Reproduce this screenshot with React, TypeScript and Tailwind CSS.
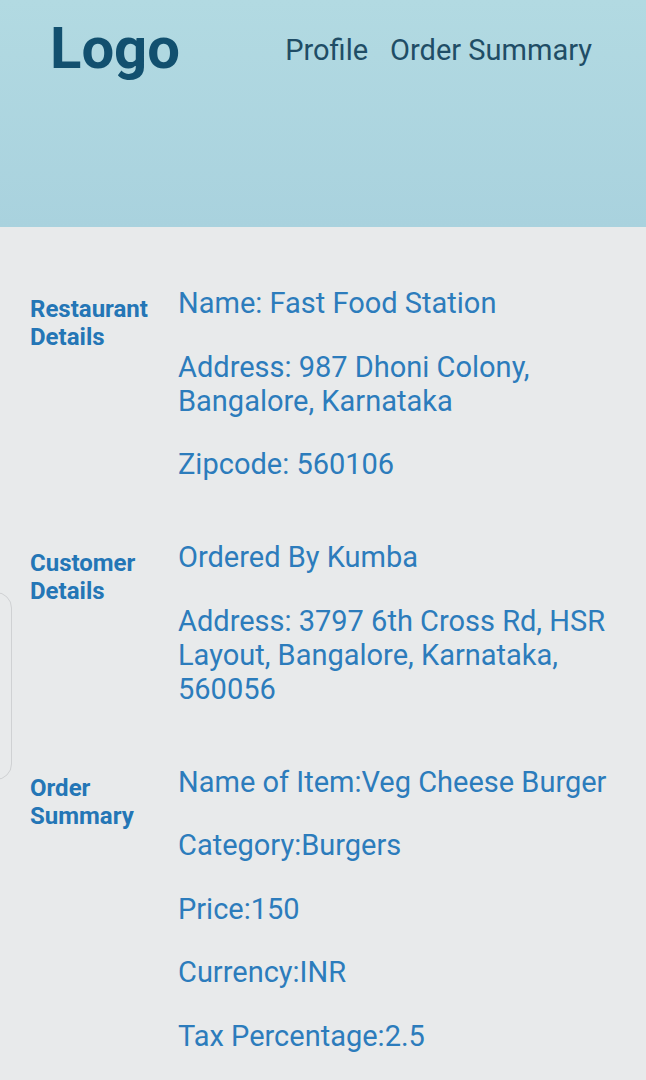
const restaurant = [
  ["Name: Fast Food Station"],
  ["Address: 987 Dhoni Colony, Bangalore, Karnataka"],
  ["Zipcode: 560106"],
];

const customer = [
  ["Ordered By Kumba"],
  ["Address: 3797 6th Cross Rd, HSR Layout, Bangalore, Karnataka, 560056"],
];

const order = [
  ["Name of Item:Veg Cheese Burger"],
  ["Category:Burgers"],
  ["Price:150"],
  ["Currency:INR"],
  ["Tax Percentage:2.5"],
];

function Section({ title, lines }: { title: string[]; lines: string[][] }) {
  return (
    <section className="flex">
      <h2 className="w-[148px] shrink-0 pt-[9px] text-[24px] leading-[28px] font-bold text-[#2476b6]">
        {title.map((t) => (
          <span key={t} className="block">
            {t}
          </span>
        ))}
      </h2>
      <div className="flex flex-col gap-[29.5px] pr-[24px]">
        {lines.map((l) => (
          <p key={l[0]} className="text-[29px] leading-[34px] text-[#2c7cbc]">
            {l[0]}
          </p>
        ))}
      </div>
    </section>
  );
}

export default function App() {
  return (
    <div
      className="relative min-h-[1080px] bg-[#e8eaeb] overflow-hidden"
      style={{ fontFamily: "Roboto, 'Noto Sans', sans-serif" }}
    >
      {/* header */}
      <header className="h-[227px] bg-gradient-to-b from-[#b2dae2] to-[#a9d2de] flex items-start justify-between pl-[50px] pr-[54px]">
        <div className="pt-[19px] text-[58px] leading-none font-bold text-[#12506f]">Logo</div>
        <nav className="pt-[36px] flex gap-[22px] text-[29px] leading-none text-[#1f4d66]">
          <a>Profile</a>
          <a>Order Summary</a>
        </nav>
      </header>

      {/* details */}
      <main className="pl-[30px] pt-[59px] flex flex-col gap-[59px]">
        <Section title={["Restaurant", "Details"]} lines={restaurant} />
        <Section title={["Customer", "Details"]} lines={customer} />
        <Section title={["Order", "Summary"]} lines={order} />
      </main>

      {/* side handle */}
      <div className="absolute left-[-24px] top-[592px] w-[36px] h-[188px] rounded-2xl border border-[#cfd1d3]" />
    </div>
  );
}
